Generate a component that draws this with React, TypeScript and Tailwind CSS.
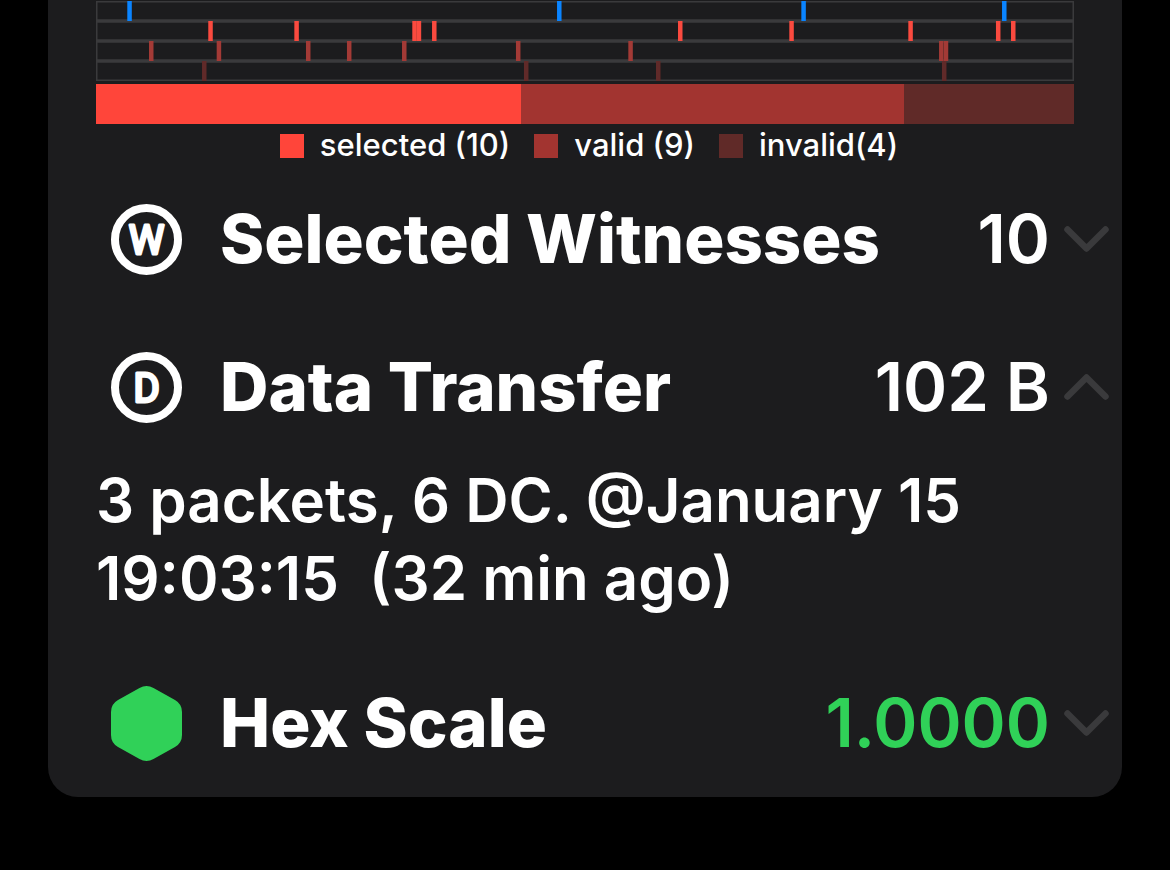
import { useState, type ReactNode } from 'react';
import clsx from 'clsx';

// tick positions are percentages of the timeline width
const lanes = [
  { id: 'beacons', color: '#0a84ff', ticks: [3.2, 47.14, 72.12, 92.64] },
  {
    id: 'selected',
    color: '#fa4a3f',
    ticks: [11.48, 20.28, 32.34, 32.79, 34.36, 59.51, 70.89, 83.06, 92.02, 93.56],
  },
  {
    id: 'valid',
    color: '#a33a36',
    ticks: [5.42, 12.34, 21.47, 25.66, 31.29, 42.94, 54.43, 86.2, 86.68],
  },
  { id: 'invalid', color: '#602a29', ticks: [10.84, 43.76, 57.26, 86.5] },
];

const shares = [
  { label: 'selected (10)', count: 10, color: 'bg-[#ff453a]' },
  { label: 'valid (9)', count: 9, color: 'bg-[#a23430]' },
  { label: 'invalid(4)', count: 4, color: 'bg-[#602a28]' },
];

function Timeline() {
  return (
    <svg className="block h-20 w-full" role="img" aria-label="Witness timeline">
      {lanes.map((lane, i) => (
        <rect
          key={lane.id}
          y={i * 20}
          width="100%"
          height="20"
          fill="none"
          stroke="#3a3a3c"
          strokeWidth="3"
        />
      ))}
      {lanes.map((lane, i) =>
        lane.ticks.map((tick) => (
          <rect
            key={`${lane.id}-${tick}`}
            x={`${tick}%`}
            y={i * 20}
            width="4.5"
            height="20"
            fill={lane.color}
          />
        ))
      )}
    </svg>
  );
}

function ShareBar() {
  const total = shares.reduce((sum, s) => sum + s.count, 0);

  return (
    <div className="mt-[3px] flex h-10">
      {shares.map((s) => (
        <div
          key={s.label}
          className={s.color}
          style={{ width: `${(s.count / total) * 100}%` }}
        />
      ))}
    </div>
  );
}

function Legend() {
  return (
    <ul className="flex h-[41px] items-center justify-center gap-6 pt-0.5 pl-2 text-[31px] font-medium">
      {shares.map((s) => (
        <li key={s.label} className="flex items-center gap-4 whitespace-nowrap">
          <span className={clsx('size-6', s.color)} />
          {s.label}
        </li>
      ))}
    </ul>
  );
}

function LetterIcon({ letter }: { letter: string }) {
  return (
    <svg className="size-[71px]" viewBox="0 0 71 71" aria-hidden="true">
      <circle cx="35.5" cy="35.5" r="31.5" fill="none" stroke="#fff" strokeWidth="8" />
      <text
        x="35.5"
        y="50"
        textAnchor="middle"
        className="fill-white stroke-white font-['Roboto',sans-serif] text-[40px] font-normal"
        strokeWidth="3"
        strokeLinejoin="round"
      >
        {letter}
      </text>
    </svg>
  );
}

function HexIcon() {
  return (
    <svg className="h-[75px] w-[71px]" viewBox="0 0 71 75" aria-hidden="true">
      <path
        d="M28.5 2Q35.5-2 42.5 2L64 14Q71 18 71 26V49Q71 57 64 61L42.5 73Q35.5 77 28.5 73L7 61Q0 57 0 49V26Q0 18 7 14Z"
        fill="#30d158"
      />
    </svg>
  );
}

function Chevron({ up }: { up: boolean }) {
  return (
    <svg
      className={clsx('h-[26px] w-[45px] shrink-0', up && 'rotate-180')}
      viewBox="0 0 45 26"
      fill="none"
      stroke="#3a3a3c"
      strokeWidth="6.5"
      strokeLinecap="round"
      strokeLinejoin="round"
      aria-hidden="true"
    >
      <path d="M3.5 3.5L22.5 22.5L41.5 3.5" />
    </svg>
  );
}

interface SectionProps {
  icon: ReactNode;
  title: string;
  value: string;
  valueClass?: string;
  defaultOpen?: boolean;
  children?: ReactNode;
}

function Section({ icon, title, value, valueClass, defaultOpen = false, children }: SectionProps) {
  const [open, setOpen] = useState(defaultOpen);

  return (
    <section>
      <button
        type="button"
        aria-expanded={open}
        onClick={() => setOpen(!open)}
        className="flex h-[148px] w-full items-center pr-[13px] pl-[63px] text-left text-[67px] whitespace-nowrap"
      >
        {icon}
        <span className="ml-[38px] flex-1 font-extrabold">{title}</span>
        <span className={clsx('mr-3.5 font-semibold', valueClass)}>{value}</span>
        <Chevron up={open} />
      </button>
      {open && children}
    </section>
  );
}

export default function App() {
  return (
    <div className="min-h-screen bg-black px-12 font-['Inter',sans-serif] text-white">
      <main className="rounded-b-[30px] bg-[#1c1c1e] pt-px">
        <div className="px-12">
          <Timeline />
          <ShareBar />
          <Legend />
        </div>

        <Section icon={<LetterIcon letter="W" />} title="Selected Witnesses" value="10" />
        <Section icon={<LetterIcon letter="D" />} title="Data Transfer" value="102 B" defaultOpen>
          <p className="px-12 pb-8 text-[60px] leading-[78px] font-semibold whitespace-pre-wrap">
            {'3 packets, 6 DC. @January 15 19:03:15  (32 min ago)'}
          </p>
        </Section>
        <Section
          icon={<HexIcon />}
          title="Hex Scale"
          value="1.0000"
          valueClass="text-[#30d158]"
        />
      </main>
    </div>
  );
}
